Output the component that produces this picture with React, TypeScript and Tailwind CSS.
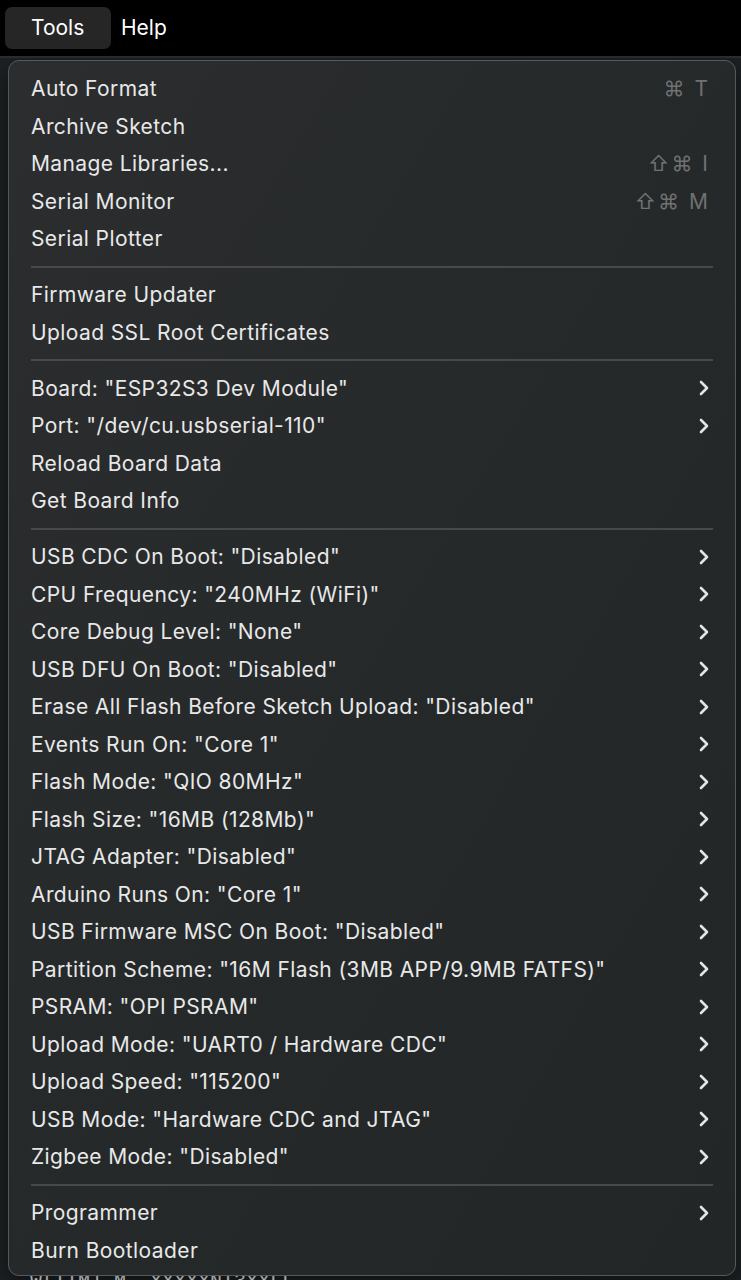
import React from 'react'

type Item = { label: string; sub?: boolean; keys?: string } | 'sep'

const items: Item[] = [
  { label: 'Auto Format', keys: '⌘ T' },
  { label: 'Archive Sketch' },
  { label: 'Manage Libraries...', keys: '⇧⌘ I' },
  { label: 'Serial Monitor', keys: '⇧⌘ M' },
  { label: 'Serial Plotter' },
  'sep',
  { label: 'Firmware Updater' },
  { label: 'Upload SSL Root Certificates' },
  'sep',
  { label: 'Board: "ESP32S3 Dev Module"', sub: true },
  { label: 'Port: "/dev/cu.usbserial-110"', sub: true },
  { label: 'Reload Board Data' },
  { label: 'Get Board Info' },
  'sep',
  { label: 'USB CDC On Boot: "Disabled"', sub: true },
  { label: 'CPU Frequency: "240MHz (WiFi)"', sub: true },
  { label: 'Core Debug Level: "None"', sub: true },
  { label: 'USB DFU On Boot: "Disabled"', sub: true },
  { label: 'Erase All Flash Before Sketch Upload: "Disabled"', sub: true },
  { label: 'Events Run On: "Core 1"', sub: true },
  { label: 'Flash Mode: "QIO 80MHz"', sub: true },
  { label: 'Flash Size: "16MB (128Mb)"', sub: true },
  { label: 'JTAG Adapter: "Disabled"', sub: true },
  { label: 'Arduino Runs On: "Core 1"', sub: true },
  { label: 'USB Firmware MSC On Boot: "Disabled"', sub: true },
  { label: 'Partition Scheme: "16M Flash (3MB APP/9.9MB FATFS)"', sub: true },
  { label: 'PSRAM: "OPI PSRAM"', sub: true },
  { label: 'Upload Mode: "UART0 / Hardware CDC"', sub: true },
  { label: 'Upload Speed: "115200"', sub: true },
  { label: 'USB Mode: "Hardware CDC and JTAG"', sub: true },
  { label: 'Zigbee Mode: "Disabled"', sub: true },
  'sep',
  { label: 'Programmer', sub: true },
  { label: 'Burn Bootloader' },
]

function Chevron() {
  return (
    <svg width="12" height="16" viewBox="0 0 12 16" className="text-[#e4e4e4]">
      <polyline points="3,2 9,8 3,14" fill="none" stroke="currentColor" strokeWidth="2.6" strokeLinecap="round" strokeLinejoin="round" />
    </svg>
  )
}

export default function App() {
  return (
    <div className="relative w-[741px] h-[1280px] overflow-hidden bg-[#1d2123]" style={{ fontFamily: 'Inter, "Noto Sans", sans-serif' }}>
      <div className="h-[58px] bg-black flex items-center gap-[5px] px-[5px] border-b-2 border-[#2c2f31]">
        <div className="h-[42px] w-[106px] rounded-[7px] bg-[#262626] flex items-center pl-[26px] text-[21px] text-white">Tools</div>
        <div className="text-[21px] text-white pl-[5px]">Help</div>
      </div>
      <div className="h-[1214px]"></div>
      <div className="pl-[30px] text-[20px] text-white leading-none" style={{ fontFamily: '"Liberation Mono", monospace' }}>W[TIM] M. XXXXXNT3XXLL</div>

      <div className="absolute left-[8px] top-[60px] w-[728px] rounded-[11px] border border-[#56595b] bg-gradient-to-br from-[#2b2d2e] via-[#26292a] to-[#232627] pt-[9px] pb-[6px] shadow-[0_8px_24px_rgba(0,0,0,0.5)]">
        {items.map((it, i) =>
          it === 'sep' ? (
            <div key={i} className="h-[18.5px] flex items-center px-[22px]">
              <div className="h-[2px] w-full bg-[#47494b]"></div>
            </div>
          ) : (
            <div key={i} className="h-[37.5px] flex items-center justify-between pl-[22px] pr-[25px] text-[21px] tracking-[0.4px] text-[#e8e8e8]">
              <span>{it.label}</span>
              {it.sub && <Chevron />}
              {it.keys && <span className="text-[#6f7172] tracking-[2px]">{it.keys}</span>}
            </div>
          )
        )}
      </div>
    </div>
  )
}
